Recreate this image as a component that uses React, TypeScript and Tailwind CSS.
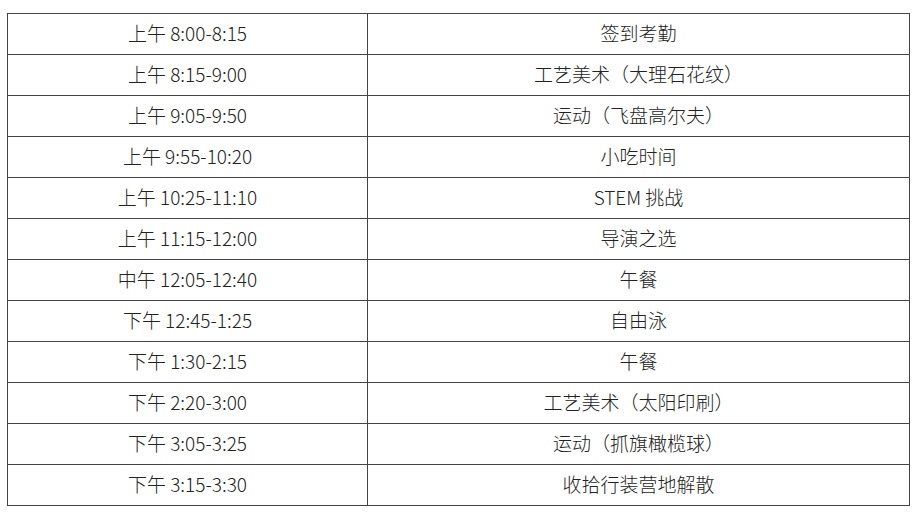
import React from "react";

const rows: [string, string][] = [
  ["上午 8:00-8:15", "签到考勤"],
  ["上午 8:15-9:00", "工艺美术（大理石花纹）"],
  ["上午 9:05-9:50", "运动（飞盘高尔夫）"],
  ["上午 9:55-10:20", "小吃时间"],
  ["上午 10:25-11:10", "STEM 挑战"],
  ["上午 11:15-12:00", "导演之选"],
  ["中午 12:05-12:40", "午餐"],
  ["下午 12:45-1:25", "自由泳"],
  ["下午 1:30-2:15", "午餐"],
  ["下午 2:20-3:00", "工艺美术（太阳印刷）"],
  ["下午 3:05-3:25", "运动（抓旗橄榄球）"],
  ["下午 3:15-3:30", "收拾行装营地解散"],
];

export default function App() {
  return (
    <div className="w-[922px] h-[519px] bg-white pt-[13px] pl-[7px] font-['Noto_Sans_CJK_SC','Noto_Sans',sans-serif] text-[#222]">
      <table className="w-[903px] border-collapse table-fixed">
        <colgroup>
          <col className="w-[360px]" />
          <col />
        </colgroup>
        <tbody>
          {rows.map(([t, a], i) => (
            <tr key={i} className="h-[41px]">
              <td className="border border-[#444] text-center text-[19px] font-light leading-none p-0 pb-[3px]">{t}</td>
              <td className="border border-[#444] text-center text-[19px] font-light leading-none p-0 pb-[3px]">{a}</td>
            </tr>
          ))}
        </tbody>
      </table>
    </div>
  );
}
